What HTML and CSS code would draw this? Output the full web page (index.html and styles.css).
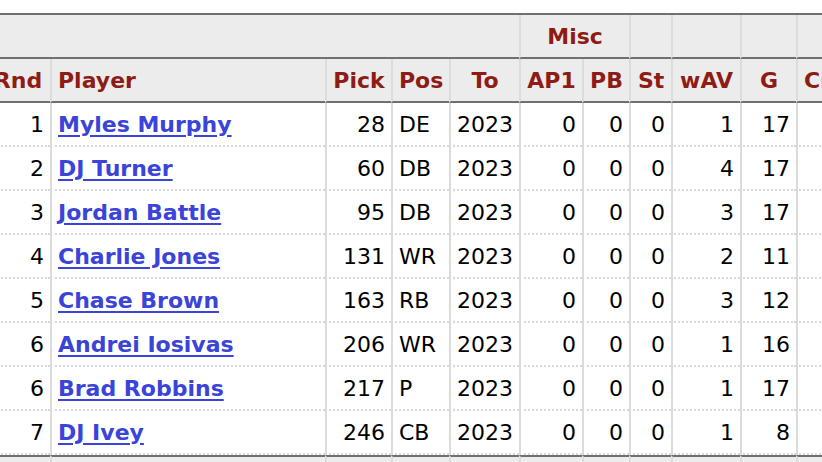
FILE: index.html
```html
<!DOCTYPE html>
<html lang="en">
<head>
    <meta charset="UTF-8">
    <meta name="viewport" content="width=device-width, initial-scale=1.0">
    <title>2023 Draft Picks</title>
    <link rel="stylesheet" href="styles.css">
</head>
<body>
    <div class="table-wrap">
        <table class="stats-table">
            <colgroup>
                <col class="c-rnd">
                <col class="c-player">
                <col class="c-pick">
                <col class="c-pos">
                <col class="c-to">
                <col class="c-ap1">
                <col class="c-pb">
                <col class="c-st">
                <col class="c-wav">
                <col class="c-g">
                <col class="c-cmp">
            </colgroup>
            <thead>
                <tr class="over-header">
                    <th colspan="5" class="blank"></th>
                    <th colspan="2">Misc</th>
                    <th></th>
                    <th></th>
                    <th></th>
                    <th></th>
                </tr>
                <tr class="main-header">
                    <th>Rnd</th>
                    <th class="left">Player</th>
                    <th>Pick</th>
                    <th class="left">Pos</th>
                    <th>To</th>
                    <th>AP1</th>
                    <th>PB</th>
                    <th>St</th>
                    <th>wAV</th>
                    <th>G</th>
                    <th>Cmp</th>
                </tr>
            </thead>
            <tbody>
                <tr>
                    <td>1</td><td class="left"><a href="#">Myles Murphy</a></td><td>28</td><td class="left">DE</td><td>2023</td>
                    <td>0</td><td>0</td><td>0</td><td>1</td><td>17</td><td></td>
                </tr>
                <tr>
                    <td>2</td><td class="left"><a href="#">DJ Turner</a></td><td>60</td><td class="left">DB</td><td>2023</td>
                    <td>0</td><td>0</td><td>0</td><td>4</td><td>17</td><td></td>
                </tr>
                <tr>
                    <td>3</td><td class="left"><a href="#">Jordan Battle</a></td><td>95</td><td class="left">DB</td><td>2023</td>
                    <td>0</td><td>0</td><td>0</td><td>3</td><td>17</td><td></td>
                </tr>
                <tr>
                    <td>4</td><td class="left"><a href="#">Charlie Jones</a></td><td>131</td><td class="left">WR</td><td>2023</td>
                    <td>0</td><td>0</td><td>0</td><td>2</td><td>11</td><td></td>
                </tr>
                <tr>
                    <td>5</td><td class="left"><a href="#">Chase Brown</a></td><td>163</td><td class="left">RB</td><td>2023</td>
                    <td>0</td><td>0</td><td>0</td><td>3</td><td>12</td><td></td>
                </tr>
                <tr>
                    <td>6</td><td class="left"><a href="#">Andrei Iosivas</a></td><td>206</td><td class="left">WR</td><td>2023</td>
                    <td>0</td><td>0</td><td>0</td><td>1</td><td>16</td><td></td>
                </tr>
                <tr>
                    <td>6</td><td class="left"><a href="#">Brad Robbins</a></td><td>217</td><td class="left">P</td><td>2023</td>
                    <td>0</td><td>0</td><td>0</td><td>1</td><td>17</td><td></td>
                </tr>
                <tr>
                    <td>7</td><td class="left"><a href="#">DJ Ivey</a></td><td>246</td><td class="left">CB</td><td>2023</td>
                    <td>0</td><td>0</td><td>0</td><td>1</td><td>8</td><td></td>
                </tr>
            </tbody>
            <tfoot>
                <tr class="foot-row">
                    <td></td><td></td><td></td><td></td><td></td><td></td>
                    <td></td><td></td><td></td><td></td><td></td>
                </tr>
            </tfoot>
        </table>
    </div>
</body>
</html>
```

FILE: styles.css
```css
body {
    margin: 0;
    background: #fff;
    font-family: 'DejaVu Sans', Verdana, sans-serif;
    font-size: 22px;
    color: #000;
}

.table-wrap {
    width: 822px;
    height: 462px;
    overflow: hidden;
    padding-top: 13px;
    box-sizing: border-box;
}

.stats-table {
    margin-left: -14px;
    border-collapse: separate;
    border-spacing: 0;
    table-layout: fixed;
    width: 874px;
    border-top: 2px solid #707070;
}

.c-rnd { width: 64px; }
.c-player { width: 275px; }
.c-pick { width: 66px; }
.c-pos { width: 58px; }
.c-to { width: 70px; }
.c-ap1 { width: 63px; }
.c-pb { width: 47px; }
.c-st { width: 42px; }
.c-wav { width: 69px; }
.c-g { width: 56px; }
.c-cmp { width: 64px; }

.stats-table th,
.stats-table td {
    box-sizing: border-box;
    padding: 0 6px;
    white-space: nowrap;
    overflow: hidden;
    border-left: 2px solid #dcdcdc;
}

.stats-table th:first-child,
.stats-table td:first-child {
    border-left: none;
}

.stats-table th {
    height: 44px;
    background: #ececec;
    color: #8e1c14;
    font-weight: bold;
    text-align: center;
    border-bottom: 2px solid #707070;
}

.stats-table th.left {
    text-align: left;
}

.stats-table td {
    height: 44px;
    text-align: right;
    border-bottom: 2px dotted #d8d8d8;
}

.stats-table td.left {
    text-align: left;
}

.stats-table a {
    color: #3a44d9;
    font-weight: bold;
    text-decoration: underline;
    text-decoration-thickness: 2px;
    text-underline-offset: 3px;
}

.foot-row td {
    background: #ececec;
    border-top: 2px solid #707070;
    border-bottom: none;
}
```
